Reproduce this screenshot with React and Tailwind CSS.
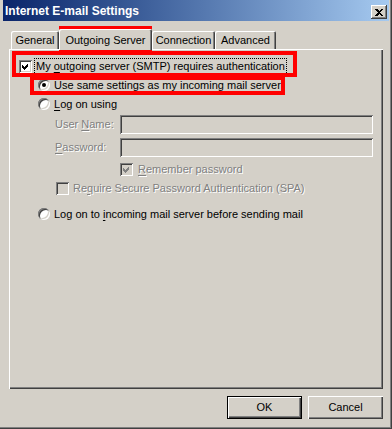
import React from "react";

const font = { fontFamily: '"Liberation Sans", Arial, sans-serif' };

function U({ children }) {
  return <span className="underline underline-offset-[2px]">{children}</span>;
}

function Check({ checked, disabled }) {
  return (
    <div
      className={`w-[13px] h-[13px] shrink-0 relative ${disabled ? "bg-[#d4d0c8]" : "bg-white"} shadow-[inset_1px_1px_#808080,inset_-1px_-1px_#ffffff,inset_2px_2px_#404040,inset_-2px_-2px_#d4d0c8]`}
    >
      {checked && (
        <svg width="13" height="13" viewBox="0 0 13 13" className="absolute left-0 top-0">
          <path
            d="M3 5 L5 7 L9 3 L9 6 L5 10 L3 8 Z"
            fill={disabled ? "#808080" : "#000000"}
            shapeRendering="crispEdges"
          />
        </svg>
      )}
    </div>
  );
}

function Radio({ checked }) {
  return (
    <div className="w-[12px] h-[12px] shrink-0 rounded-full bg-white flex items-center justify-center shadow-[inset_1px_1px_#808080,inset_-1px_-1px_#ffffff,inset_2px_2px_#404040,inset_-2px_-2px_#d4d0c8]">
      {checked && <div className="w-[4px] h-[4px] rounded-full bg-black" />}
    </div>
  );
}

const disabledText = "text-[#808080] [text-shadow:1px_1px_0_#ffffff]";

export default function App() {
  return (
    <div
      className="w-[392px] h-[429px] bg-[#d4d0c8] relative flex flex-col px-[3px] text-[11px] text-black leading-none shadow-[inset_-1px_-1px_#404040,inset_-2px_-2px_#808080]"
      style={font}
    >
      {/* Title bar */}
      <div className="h-[21px] shrink-0 flex items-start justify-between bg-gradient-to-r from-[#0a246a] to-[#a6caf0]">
        <span className="text-white font-bold text-[12px] pl-[2px] pt-[5px]">Internet E-mail Settings</span>
        <div className="w-[16px] h-[14px] mt-[5px] mr-[2px] bg-[#d4d0c8] flex items-center justify-center shadow-[inset_-1px_-1px_#404040,inset_1px_1px_#ffffff,inset_-2px_-2px_#808080]">
          <svg width="8" height="7" viewBox="0 0 8 7" shapeRendering="crispEdges">
            <path d="M0 0 L2 0 L4 2 L6 0 L8 0 L5 3.5 L8 7 L6 7 L4 5 L2 7 L0 7 L3 3.5 Z" fill="#000" />
          </svg>
        </div>
      </div>

      {/* Body */}
      <div className="flex flex-col pt-[8px] px-[6px]">
        {/* Tabs */}
        <div className="flex items-end h-[21px] -mb-px relative z-10 pl-[2px]">
          <div className="w-[48px] h-[18px] mb-px flex items-center justify-center pt-px shadow-[inset_1px_1px_#ffffff,inset_-1px_0_#404040,inset_-2px_0_#808080] rounded-t-[2px]">
            General
          </div>
          <div className="w-[93px] h-[21px] flex items-start justify-center pt-[6px] bg-[#d4d0c8] shadow-[inset_1px_1px_#ffffff,inset_-1px_0_#404040,inset_-2px_0_#808080] rounded-t-[2px]">
            Outgoing Server
          </div>
          <div className="w-[63px] h-[18px] mb-px flex items-center justify-center pt-px shadow-[inset_1px_1px_#ffffff,inset_-1px_0_#404040,inset_-2px_0_#808080] rounded-t-[2px]">
            Connection
          </div>
          <div className="w-[61px] h-[18px] mb-px flex items-center justify-center pt-px shadow-[inset_1px_1px_#ffffff,inset_-1px_0_#404040,inset_-2px_0_#808080] rounded-t-[2px]">
            Advanced
          </div>
        </div>

        {/* Panel */}
        <div className="h-[340px] flex flex-col pt-[9px] pl-[1px] shadow-[inset_1px_1px_#ffffff,inset_-1px_-1px_#404040,inset_-2px_-2px_#808080]">
          <div className="h-[16px] flex items-center pl-[9px]">
            <Check checked />
            <span className="ml-[3px] px-px py-[2px] outline outline-1 outline-dotted outline-black">
              My <U>o</U>utgoing server (SMTP) requires authentication
            </span>
          </div>
          <div className="h-[16px] mt-[3px] flex items-center pl-[28px]">
            <Radio checked />
            <span className="ml-[4px]"><U>U</U>se same settings as my incoming mail server</span>
          </div>
          <div className="h-[16px] mt-[3px] flex items-center pl-[28px]">
            <Radio />
            <span className="ml-[4px]"><U>L</U>og on using</span>
          </div>
          <div className="h-[19px] mt-[3px] flex items-center pl-[45px]">
            <span className={`w-[65px] ${disabledText}`}>User <U>N</U>ame:</span>
            <div className="w-[253px] h-[19px] bg-[#d4d0c8] shadow-[inset_1px_1px_#808080,inset_-1px_-1px_#ffffff,inset_2px_2px_#404040,inset_-2px_-2px_#d4d0c8]" />
          </div>
          <div className="h-[19px] mt-[4px] flex items-center pl-[45px]">
            <span className={`w-[65px] ${disabledText}`}><U>P</U>assword:</span>
            <div className="w-[253px] h-[19px] bg-[#d4d0c8] shadow-[inset_1px_1px_#808080,inset_-1px_-1px_#ffffff,inset_2px_2px_#404040,inset_-2px_-2px_#d4d0c8]" />
          </div>
          <div className="h-[16px] mt-[4px] flex items-center pl-[110px]">
            <Check checked disabled />
            <span className={`ml-[5px] ${disabledText}`}><U>R</U>emember password</span>
          </div>
          <div className="h-[16px] mt-[3px] flex items-center pl-[46px]">
            <Check disabled />
            <span className={`ml-[4px] ${disabledText}`}>Re<U>q</U>uire Secure Password Authentication (SPA)</span>
          </div>
          <div className="h-[16px] mt-[10px] flex items-center pl-[28px]">
            <Radio />
            <span className="ml-[4px]">Log on to <U>i</U>ncoming mail server before sending mail</span>
          </div>
        </div>

        {/* Buttons */}
        <div className="flex justify-end gap-[6px] mt-[7px]">
          <div className="w-[75px] h-[23px] flex items-center justify-center shadow-[inset_0_0_0_1px_#000000,inset_2px_2px_#ffffff,inset_-2px_-2px_#404040,inset_-3px_-3px_#808080]">
            OK
          </div>
          <div className="w-[75px] h-[23px] flex items-center justify-center shadow-[inset_1px_1px_#ffffff,inset_-1px_-1px_#404040,inset_-2px_-2px_#808080]">
            Cancel
          </div>
        </div>
      </div>

      {/* Red annotation boxes */}
      <div className="absolute left-[59px] top-[26px] w-[93px] h-[25px] border-[4px] border-[#ff0000] pointer-events-none" />
      <div className="absolute left-[12px] top-[51px] w-[285px] h-[26px] border-[4px] border-[#ff0000] pointer-events-none" />
      <div className="absolute left-[30px] top-[76px] w-[255px] h-[19px] border-[4px] border-[#ff0000] pointer-events-none" />
    </div>
  );
}
